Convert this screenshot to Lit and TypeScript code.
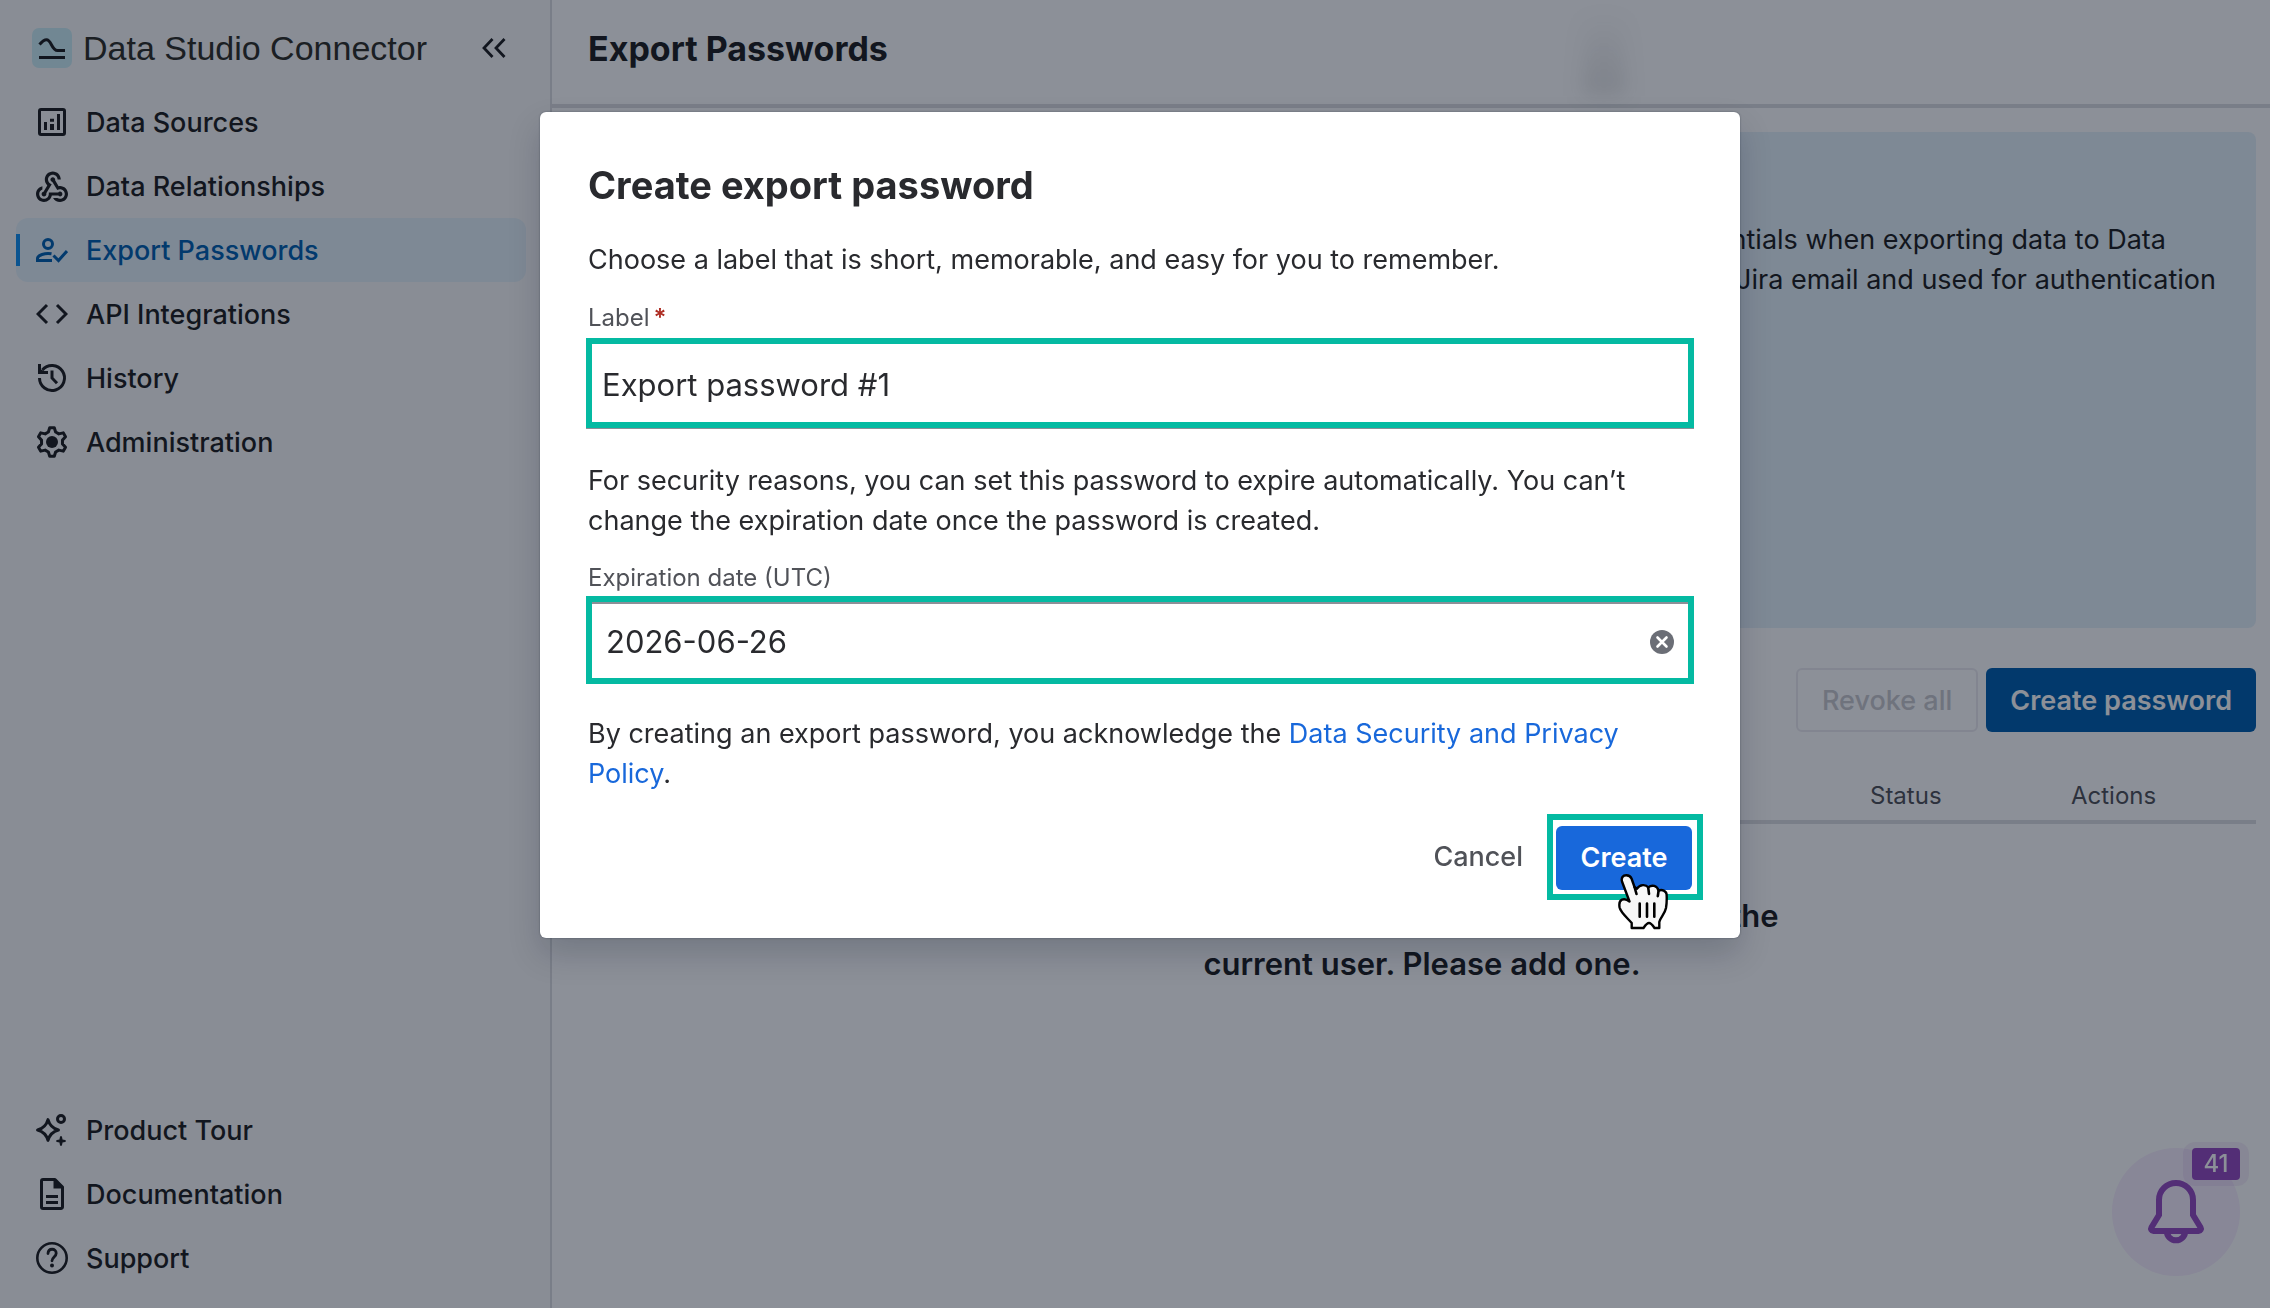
import { LitElement, html, svg, css, type TemplateResult } from "lit";
import { customElement, state } from "lit/decorators.js";

type IconName =
  | "sources"
  | "relationships"
  | "passwords"
  | "code"
  | "history"
  | "settings"
  | "tour"
  | "document"
  | "help";

/** Six-toothed gear outline around the centre of a 32-unit box. */
const gearPoints = Array.from({ length: 6 }, (_, i) => {
  const a = (i * Math.PI) / 3;
  return [
    [-3.6, -10],
    [-2.3, -14.3],
    [2.3, -14.3],
    [3.6, -10],
  ]
    .map(([x, y]) =>
      [
        (16 + x * Math.cos(a) - y * Math.sin(a)).toFixed(2),
        (16 + x * Math.sin(a) + y * Math.cos(a)).toFixed(2),
      ].join(",")
    )
    .join(" ");
}).join(" ");

const icons: Record<IconName, TemplateResult> = {
  sources: svg`
    <rect x="3.5" y="3.5" width="25" height="25" rx="1.5" fill="none" stroke="currentColor" stroke-width="3"/>
    <path fill="currentColor" d="M8 16h3v8H8zM14 12.7h4v3h-4zM14 18h4v6h-4zM21 8h3v16h-3z"/>`,
  relationships: svg`
    <path fill="currentColor" transform="translate(-3.2 -1.6) scale(1.6)" d="M10 15h5.88c.27-.31.67-.5 1.12-.5.83 0 1.5.67 1.5 1.5s-.67 1.5-1.5 1.5c-.44 0-.84-.19-1.12-.5H11.9c-.46 2.28-2.48 4-4.9 4-2.76 0-5-2.24-5-5 0-2.42 1.72-4.44 4-4.9v2.07C4.84 13.58 4 14.7 4 16c0 1.65 1.35 3 3 3s3-1.35 3-3v-1zm2.5-11c1.65 0 3 1.35 3 3h2c0-2.76-2.24-5-5-5s-5 2.24-5 5c0 1.43.6 2.71 1.55 3.62l-2.35 3.9c-.68.14-1.2.75-1.2 1.48 0 .83.67 1.5 1.5 1.5s1.5-.67 1.5-1.5c0-.16-.02-.31-.07-.45l3.38-5.63C10.49 9.61 9.5 8.42 9.5 7c0-1.65 1.35-3 3-3zm4.5 9c-.64 0-1.23.2-1.72.54l-3.05-5.07C11.53 8.35 11 7.74 11 7c0-.83.67-1.5 1.5-1.5S14 6.17 14 7c0 .15-.02.29-.06.43l2.19 3.65c.28-.05.57-.08.87-.08 2.76 0 5 2.24 5 5s-2.24 5-5 5c-1.85 0-3.47-1.01-4.33-2.5h2.67c.48.32 1.05.5 1.66.5 1.65 0 3-1.35 3-3s-1.35-3-3-3z"/>`,
  passwords: svg`
    <g fill="none" stroke="currentColor" stroke-width="3">
      <circle cx="12" cy="10" r="4.5"/>
      <path d="M15.5 19.8C9 18.6 1.5 21.2 1.5 24.6v1.900H16"/>
      <path d="M17.5 21.5l5 5 8.5-9.5"/>
    </g>`,
  code: svg`
    <g fill="none" stroke="currentColor" stroke-width="3">
      <path d="M11 7L2 16l9 9"/><path d="M21 7l9 9-9 9"/>
    </g>`,
  history: svg`
    <path fill="none" stroke="currentColor" stroke-width="3" d="M3.5 16A12.5 12.5 0 1 0 6.4 8M16 8.5V16l5 5.2"/>
    <path fill="currentColor" d="M2 2h3v5.5L8 9h4v3H2z"/>`,
  settings: svg`
    <polygon points=${gearPoints} fill="none" stroke="currentColor" stroke-width="3" stroke-linejoin="round"/>
    <circle cx="16" cy="16" r="6" fill="currentColor"/>`,
  tour: svg`
    <g fill="none" stroke="currentColor" stroke-width="3" stroke-linejoin="round">
      <path d="M12 5.6c1.6 5.8 4.6 8.8 10.4 10.4C16.6 17.6 13.6 20.6 12 26.4C10.4 20.6 7.4 17.6 1.6 16C7.4 14.4 10.4 11.4 12 5.6z"/>
      <circle cx="25" cy="5" r="3.5"/>
    </g>
    <path fill="currentColor" d="M25 22c1 0 1.2 1.5 1.5 3.5 2 .3 3.5.5 3.5 1.5s-1.5 1.2-3.5 1.5c-.3 2-.5 3.5-1.5 3.5s-1.2-1.5-1.5-3.5c-2-.3-3.5-.5-3.5-1.5s1.500-1.2 3.5-1.5c.3-2 .5-3.5 1.5-3.5z"/>`,
  document: svg`
    <path fill="none" stroke="currentColor" stroke-width="3" stroke-linejoin="round" d="M7 1.5h12L26.5 9v20a1.5 1.5 0 0 1-1.5 1.5H7A1.5 1.5 0 0 1 5.5 29V3A1.5 1.5 0 0 1 7 1.5z"/>
    <path fill="currentColor" d="M17.5 1v9.5H27V8.5L19.5 1zM10 17h12v3H10zM10 23h12v3H10z"/>`,
  help: svg`
    <circle cx="16" cy="16" r="14.7" fill="none" stroke="currentColor" stroke-width="2.6"/>
    <path fill="none" stroke="currentColor" stroke-width="2.8" stroke-linecap="round" d="M12 11.5C12.2 5.8 20.2 6 20.2 11.2c0 3.6-4.2 4-4.2 7.6"/>
    <circle cx="16" cy="23.6" r="2" fill="currentColor"/>`,
};

interface NavEntry {
  icon: IconName;
  label: string;
}

const primaryNav: NavEntry[] = [
  { icon: "sources", label: "Data Sources" },
  { icon: "relationships", label: "Data Relationships" },
  { icon: "passwords", label: "Export Passwords" },
  { icon: "code", label: "API Integrations" },
  { icon: "history", label: "History" },
  { icon: "settings", label: "Administration" },
];

const secondaryNav: NavEntry[] = [
  { icon: "tour", label: "Product Tour" },
  { icon: "document", label: "Documentation" },
  { icon: "help", label: "Support" },
];

const renderNavList = (entries: NavEntry[], current = "") => html`
  <ul class="nav-list">
    ${entries.map(
      ({ icon, label }) => html`
        <li>
          <a
            class="nav-item ${label === current ? "selected" : ""}"
            href="#"
            aria-current=${label === current ? "page" : "false"}
          >
            <svg class="nav-icon" viewBox="0 0 32 32" aria-hidden="true">${icons[icon]}</svg>
            <span>${label}</span>
          </a>
        </li>
      `
    )}
  </ul>
`;

@customElement("side-nav")
export class SideNav extends LitElement {
  static styles = css`
    :host {
      display: flex;
      flex-direction: column;
      box-sizing: border-box;
      flex: 0 0 552px;
      padding: 28px 24px 18px 16px;
      background: #fafafa;
      border-right: 2px solid #dddee1;
    }
    .brand {
      display: flex;
      align-items: center;
      padding: 0 20px 0 16px;
      margin-bottom: 22px;
    }
    .logo {
      width: 40px;
      height: 40px;
      margin-right: 11px;
    }
    .brand-name {
      flex: 1;
      font: 400 34px/40px "Liberation Sans", sans-serif;
      color: #2f2f27;
    }
    .collapse {
      width: 24px;
      height: 24px;
      padding: 0;
      border: 0;
      background: none;
      color: #1e1f21;
    }
    .collapse svg {
      display: block;
    }
    .nav-list {
      list-style: none;
      margin: 0;
      padding: 0;
    }
    .nav-item {
      display: flex;
      align-items: center;
      gap: 18px;
      height: 64px;
      padding: 0 20px;
      border-radius: 12px;
      color: #1e1f21;
      font-size: 27px;
      font-weight: 500;
      text-decoration: none;
    }
    .nav-item.selected {
      color: #0060b0;
      background: linear-gradient(#1290f0, #1290f0) left center / 4px 32px no-repeat #e6f2fa;
    }
    .nav-icon {
      width: 32px;
      height: 32px;
    }
    .spacer {
      flex: 1;
    }
  `;

  render() {
    return html`
      <div class="brand">
        <svg class="logo" viewBox="0 0 40 40" aria-hidden="true">
          <rect width="40" height="40" rx="7" fill="#cdeef5" />
          <path
            d="M7.5 16.5C10.5 13 12.5 11.7 14.5 11.7C19.5 11.7 19.5 22.5 25.5 22.5H33M7 29.5H33"
            fill="none"
            stroke="#1e1f21"
            stroke-width="3"
          />
        </svg>
        <span class="brand-name">Data Studio Connector</span>
        <button class="collapse" aria-label="Collapse sidebar">
          <svg width="24" height="24" viewBox="0 0 24 24" aria-hidden="true">
            <path
              d="M10.5 3L2 12l8.5 9M22.5 3L14 12l8.5 9"
              fill="none"
              stroke="currentColor"
              stroke-width="2.8"
            />
          </svg>
        </button>
      </div>
      <nav aria-label="Main">${renderNavList(primaryNav, "Export Passwords")}</nav>
      <div class="spacer"></div>
      <nav aria-label="Help">${renderNavList(secondaryNav)}</nav>
    `;
  }
}

@customElement("passwords-page")
export class PasswordsPage extends LitElement {
  static styles = css`
    :host {
      display: block;
      flex: 1;
      min-width: 0;
      color: #1e1f21;
    }
    .page-header {
      position: relative;
      display: flex;
      align-items: center;
      box-sizing: border-box;
      height: 108px;
      padding: 0 36px 8px;
      border-bottom: 4px solid #dddee1;
    }
    h1 {
      margin: 0;
      font-size: 34px;
      font-weight: 700;
    }
    .smudge {
      position: absolute;
      top: 16px;
      left: 1030px;
      width: 44px;
      height: 80px;
      background: linear-gradient(rgba(30, 31, 33, 0.01), rgba(30, 31, 33, 0.11));
      filter: blur(10px);
    }
    .body {
      padding: 24px 14px 0 36px;
    }
    .notice {
      box-sizing: border-box;
      min-height: 496px;
      padding: 88px 40px 0;
      border-radius: 8px;
      background: #e6f2fa;
      font-size: 27px;
      line-height: 40px;
      text-align: right;
    }
    .notice p {
      margin: 0;
    }
    .notice .indent {
      padding-right: 50px;
    }
    .actions {
      display: flex;
      justify-content: flex-end;
      gap: 8px;
      margin: 40px 0 48px;
    }
    .actions button {
      height: 64px;
      padding: 0 24px;
      border: 0;
      border-radius: 6px;
      font: inherit;
      font-size: 27px;
      font-weight: 600;
      color: #fff;
      background: #015fae;
    }
    .actions button:disabled {
      border: 2px solid #edebf0;
      background: none;
      color: #c9c9ce;
      font-weight: 500;
    }
    table {
      width: 100%;
      border-collapse: collapse;
      table-layout: fixed;
    }
    .col-name,
    .col-status,
    .col-actions {
      padding: 0 0 8px;
      border-bottom: 4px solid #dddee1;
      font-size: 24px;
      font-weight: 400;
      line-height: 32px;
      text-align: left;
      color: #505258;
    }
    .col-status {
      width: 201px;
    }
    .col-actions {
      width: 185px;
    }
    .empty {
      padding: 68px 0 0;
      font-size: 31px;
      font-weight: 600;
      line-height: 48px;
      text-align: center;
    }
  `;

  render() {
    return html`
      <header class="page-header">
        <h1>Export Passwords</h1>
        <span class="smudge"></span>
      </header>
      <main class="body">
        <section class="notice">
          <p class="indent">credentials when exporting data to Data</p>
          <p>Jira email and used for authentication</p>
        </section>
        <div class="actions">
          <button disabled>Revoke all</button>
          <button>Create password</button>
        </div>
        <table>
          <thead>
            <tr>
              <td class="col-name"></td>
              <th class="col-status" scope="col">Status</th>
              <th class="col-actions" scope="col">Actions</th>
            </tr>
          </thead>
          <tbody>
            <tr>
              <td class="empty" colspan="3">
                There are no export passwords available for the<br />current user. Please add one.
              </td>
            </tr>
          </tbody>
        </table>
      </main>
    `;
  }
}

@customElement("notification-bell")
export class NotificationBell extends LitElement {
  static styles = css`
    :host {
      position: fixed;
      right: 30px;
      bottom: 32px;
    }
    .bell {
      display: block;
      width: 128px;
      height: 128px;
      padding: 0;
      border: 0;
      border-radius: 50%;
      background: #f8eefe;
      color: #964ac0;
    }
    .halo {
      position: absolute;
      top: -6px;
      right: -9px;
      padding: 6px 9px;
      border-radius: 12px;
      background: rgba(150, 74, 192, 0.09);
    }
    .count {
      display: block;
      width: 48px;
      border-radius: 4px;
      background: #964ac0;
      color: #fff;
      font-size: 24px;
      font-weight: 500;
      line-height: 32px;
      text-align: center;
    }
  `;

  render() {
    return html`
      <button class="bell" aria-label="Notifications">
        <svg width="128" height="128" viewBox="0 0 128 128" aria-hidden="true">
          <g fill="none" stroke="currentColor" stroke-width="6">
            <path
              d="M64 35a17 17 0 0 0-17 17v15l-7.6 12.5a2.3 2.3 0 0 0 2 3.5h45.2a2.3 2.3 0 0 0 2-3.5L81 67V52a17 17 0 0 0-17-17z"
            />
            <path d="M54.7 83a9.3 9.3 0 0 0 18.6 0" />
          </g>
        </svg>
      </button>
      <span class="halo"><span class="count">41</span></span>
    `;
  }
}

@customElement("create-password-dialog")
export class CreatePasswordDialog extends LitElement {
  static styles = css`
    :host {
      position: fixed;
      inset: 0;
      display: flex;
      align-items: flex-start;
      justify-content: center;
      padding: 112px 0 0 10px;
      background: rgba(5, 12, 31, 0.46);
      color: #292a2e;
    }
    .dialog {
      box-sizing: border-box;
      width: 100%;
      max-width: 1200px;
      padding: 48px 48px 38px;
      border-radius: 6px;
      background: #fff;
      box-shadow: 0 0 2px rgba(5, 12, 31, 0.4), 0 16px 32px rgba(5, 12, 31, 0.18);
      font-size: 27px;
      line-height: 40px;
    }
    h2 {
      margin: 0 0 30px;
      font-size: 38px;
      font-weight: 700;
      line-height: 50px;
    }
    p {
      margin: 0;
    }
    a {
      color: #1868db;
      text-decoration: none;
    }
    label {
      display: block;
      margin: 22px 0 4px;
      font-size: 24px;
      line-height: 32px;
      color: #505258;
    }
    .date-label {
      margin: 21px 0 2px;
    }
    .required {
      color: #ae2e24;
      margin-left: 4px;
      font-weight: 600;
    }
    .highlight {
      border: 6px solid #04baa2;
    }
    .field {
      display: flex;
      align-items: center;
      box-sizing: border-box;
      height: 90px;
      margin: 0 -2px 33px;
      padding-top: 4px;
      box-shadow: 0 1px 0 #8c8f97;
    }
    .date-field {
      height: 88px;
      margin-bottom: 30px;
      padding: 4px 14px 0 0;
      box-shadow: inset 0 2px 0 #8c8f97;
    }
    input {
      flex: 1;
      min-width: 0;
      padding: 0 10px;
      border: 0;
      outline: 0;
      background: none;
      font: inherit;
      font-size: 31px;
      line-height: 40px;
      color: inherit;
    }
    .date-field input {
      padding: 0 14px;
    }
    .clear {
      width: 24px;
      height: 24px;
      padding: 0;
      border: 0;
      background: none;
    }
    .clear svg,
    .cursor {
      display: block;
    }
    .footer {
      display: flex;
      justify-content: flex-end;
      align-items: center;
      margin: 20px -11px 0 0;
    }
    .footer button {
      height: 64px;
      padding: 0 24px;
      border: 0;
      border-radius: 6px;
      background: none;
      font: inherit;
      font-weight: 500;
      color: #505258;
    }
    .submit {
      position: relative;
      padding: 6px 5px 4px 3px;
    }
    .submit button {
      display: block;
      min-width: 136px;
      font-weight: 600;
      color: #fff;
      background: #1868db;
    }
    .cursor {
      position: absolute;
      top: 54px;
      left: 65px;
      pointer-events: none;
    }
  `;

  @state() private label = "Export password #1";
  @state() private expires = "2026-06-26";

  render() {
    return html`
      <section class="dialog" role="dialog" aria-modal="true" aria-labelledby="title">
        <h2 id="title">Create export password</h2>
        <p>Choose a label that is short, memorable, and easy for you to remember.</p>
        <label for="label">Label<span class="required">*</span></label>
        <div class="field highlight">
          <input
            id="label"
            type="text"
            required
            .value=${this.label}
            @input=${(e: Event) => (this.label = (e.target as HTMLInputElement).value)}
          />
        </div>
        <p>
          For security reasons, you can set this password to expire automatically. You can’t change
          the expiration date once the password is created.
        </p>
        <label class="date-label" for="expires">Expiration date (UTC)</label>
        <div class="field date-field highlight">
          <input
            id="expires"
            type="text"
            .value=${this.expires}
            @input=${(e: Event) => (this.expires = (e.target as HTMLInputElement).value)}
          />
          <button class="clear" aria-label="Clear date" @click=${() => (this.expires = "")}>
            <svg width="24" height="24" viewBox="0 0 24 24" aria-hidden="true">
              <circle cx="12" cy="12" r="12" fill="#6b6e76" />
              <path
                d="M7.5 7.5l9 9M16.5 7.5l-9 9"
                stroke="#fff"
                stroke-width="2.6"
                stroke-linecap="round"
              />
            </svg>
          </button>
        </div>
        <p>
          By creating an export password, you acknowledge the
          <a href="#">Data Security and Privacy Policy</a>.
        </p>
        <div class="footer">
          <button>Cancel</button>
          <div class="submit highlight">
            <button>Create</button>
            <svg class="cursor" width="51" height="56" viewBox="0 0 51 56" aria-hidden="true">
              <path
                d="M8.3 1.2C4.8 1.2 3 4 4 7.5L11.5 27.5C9 25.5 6.5 24.7 4 25.7C1.5 26.8 1 30 1.6 33.5C2.6 38.5 10 44.5 13.7 49V54H25.5C27.5 51 29.5 49 31 49C33 49 34.5 51 36.5 54H41.3V48C42.5 43 46.8 40 48 34C49 28 48.8 23.5 48.6 20.5C48.3 17 44 14.8 40.6 16.6C39 11.5 34 10.3 30.2 13.4C28 10.3 22 10 18.8 14.8L16.5 13L13.5 4.5C12.5 2 10.5 1.2 8.3 1.2Z"
                fill="#f7f7f7"
                stroke="#000"
                stroke-width="2.4"
                stroke-linejoin="round"
              />
              <path
                d="M16.5 13l2 7M30.2 13.4l.8 6.5M40.6 16.6l-.8 5.5M21.7 29.5v13.2M29 29.5v13.2M36.3 29.5v13.2"
                fill="none"
                stroke="#000"
                stroke-width="2.6"
                stroke-linecap="round"
              />
            </svg>
          </div>
        </div>
      </section>
    `;
  }
}

@customElement("app-root")
export class AppRoot extends LitElement {
  static styles = css`
    :host {
      display: flex;
      min-height: 100vh;
      background: #fff;
      font-family: Inter, "Noto Sans", sans-serif;
    }
  `;

  render() {
    return html`
      <side-nav></side-nav>
      <passwords-page></passwords-page>
      <notification-bell></notification-bell>
      <create-password-dialog></create-password-dialog>
    `;
  }
}
